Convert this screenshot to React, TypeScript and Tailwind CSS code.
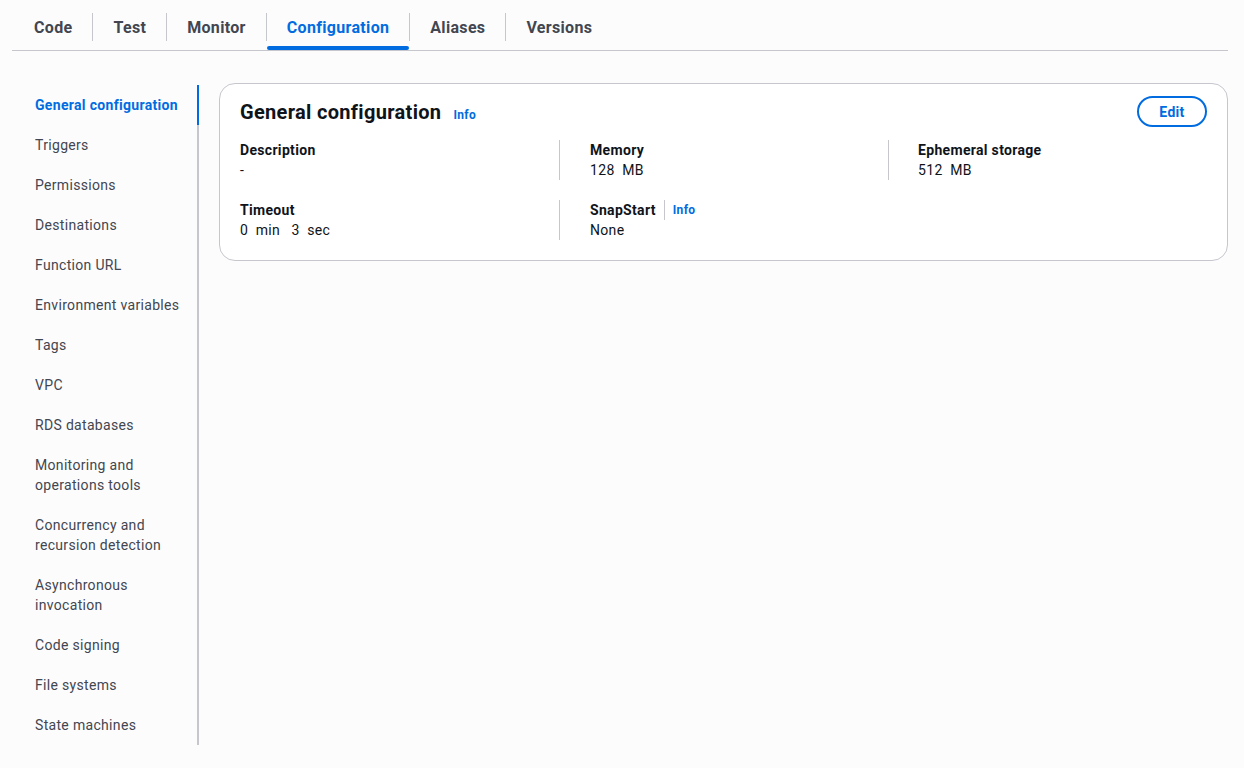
const tabs = ['Code', 'Test', 'Monitor', 'Configuration', 'Aliases', 'Versions'];

const navItems = [
  ['General configuration'],
  ['Triggers'],
  ['Permissions'],
  ['Destinations'],
  ['Function URL'],
  ['Environment variables'],
  ['Tags'],
  ['VPC'],
  ['RDS databases'],
  ['Monitoring and', 'operations tools'],
  ['Concurrency and', 'recursion detection'],
  ['Asynchronous', 'invocation'],
  ['Code signing'],
  ['File systems'],
  ['State machines'],
];

const Info = () => (
  <a href="#" className="text-xs font-bold text-[#006ce0]">
    Info
  </a>
);

const Field = ({ label, value, info }: { label: string; value: string; info?: boolean }) => (
  <div className="text-sm leading-5 text-[#0f141a]">
    <div className="flex items-center font-bold">
      <span>{label}</span>
      {info && (
        <>
          <span className="mx-2 h-5 w-px bg-[#c6c6cd]" />
          <Info />
        </>
      )}
    </div>
    <div className="whitespace-pre">{value}</div>
  </div>
);

const App = () => {
  return (
    <div className="min-h-screen bg-[#fcfcfd] font-['Roboto',sans-serif] tracking-[0.02em] text-[#0f141a]">
      <div className="pl-3 pr-4">
        <div className="flex h-[51px] border-b border-[#c6c6cd]">
          {tabs.map((t, i) => {
            const active = t === 'Configuration';
            return (
              <div key={t} className="flex items-center">
                {i > 0 && <span className="mt-1 h-7 w-px bg-[#c6c6cd]" />}
                <div
                  className={[
                    'relative flex h-full items-center pt-[5px] text-base font-bold',
                    i === 0 ? 'pl-[22px] pr-[20px]' : 'px-[20px]',
                    active ? 'text-[#006ce0]' : 'text-[#424650]',
                  ].join(' ')}
                >
                  {t}
                  {active && (
                    <span className="absolute bottom-0 left-0 right-0 h-1 rounded-full bg-[#006ce0]" />
                  )}
                </div>
              </div>
            );
          })}
        </div>
      </div>

      <div className="flex items-start gap-5 pl-[35px] pr-4 pt-[34px]">
        <nav className="relative w-[164px] shrink-0 border-r-2 border-[#c6c6cd]">
          <span className="absolute -right-[2px] top-0 h-10 w-[2px] bg-[#006ce0]" />
          {navItems.map((lines, i) => (
            <div
              key={lines[0]}
              className={[
                'py-[10px] text-sm leading-5',
                i === 0 ? 'font-bold text-[#006ce0]' : 'text-[#424650]',
              ].join(' ')}
            >
              {lines.map((l) => (
                <div key={l}>{l}</div>
              ))}
            </div>
          ))}
        </nav>

        <section className="mt-[-2px] flex-1 rounded-2xl border border-[#c6c6cd] bg-white px-5 pb-5 pt-3">
          <div className="flex h-[31px] items-center justify-between">
            <div className="flex items-baseline gap-3">
              <h2 className="text-xl font-bold leading-6">General configuration</h2>
              <Info />
            </div>
            <button
              type="button"
              className="h-[31px] w-[70px] rounded-full border-2 border-[#006ce0] text-sm font-bold text-[#006ce0]"
            >
              Edit
            </button>
          </div>

          <div className="mt-[13px] grid grid-cols-[319px_329px_1fr] gap-y-5">
            <Field label="Description" value="-" />
            <div className="border-l border-[#c6c6cd] pl-[30px]">
              <Field label="Memory" value="128  MB" />
            </div>
            <div className="border-l border-[#c6c6cd] pl-[29px]">
              <Field label="Ephemeral storage" value="512  MB" />
            </div>
            <Field label="Timeout" value="0  min   3  sec" />
            <div className="border-l border-[#c6c6cd] pl-[30px]">
              <Field label="SnapStart" value="None" info />
            </div>
            <div />
          </div>
        </section>
      </div>
    </div>
  );
};

export default App;
